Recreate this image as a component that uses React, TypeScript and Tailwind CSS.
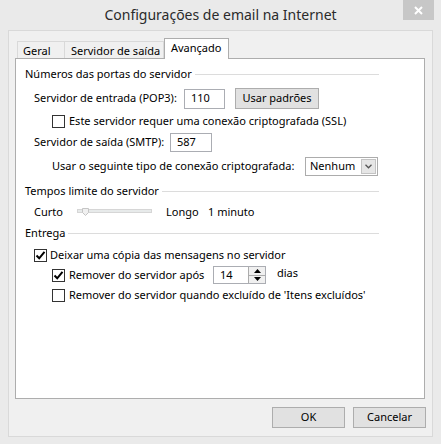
import React from 'react';

function Check({ checked }: { checked?: boolean }) {
  return (
    <span className="w-[13px] h-[13px] border border-[#333333] bg-white flex items-center justify-center shrink-0">
      {checked && (
        <svg width="11" height="11" viewBox="0 0 11 11">
          <path d="M1.5 5.5 L4.2 8.3 L9.5 1.8" stroke="#000" strokeWidth="2" fill="none" />
        </svg>
      )}
    </span>
  );
}

function Section({ title }: { title: string }) {
  return (
    <div className="flex items-center h-[16px] pl-[9px] pr-[45px]">
      <span className="whitespace-nowrap">{title}</span>
      <span className="flex-1 h-px bg-[#dcdcdc] ml-[3px]" />
    </div>
  );
}

function Box({ className, children }: { className: string; children?: React.ReactNode }) {
  return (
    <div className={`border border-[#abadb3] bg-white flex items-center pl-[6px] ${className}`}>{children}</div>
  );
}

export default function App() {
  return (
    <div className="w-[441px] h-[444px] bg-[#eaeaea] flex flex-col text-[11px] text-black font-['Segoe_UI','Noto_Sans',sans-serif] overflow-hidden">
      {/* title bar */}
      <div className="h-[30px] grid grid-cols-[1fr_auto_1fr] shrink-0">
        <div />
        <div className="flex items-center text-[14px] text-[#2b2b2b] pb-[1px]">Configurações de email na Internet</div>
        <div className="flex justify-end items-start pr-[7px]">
          <div className="w-[31px] h-[20px] bg-[#c7c7c7] flex items-center justify-center">
            <svg width="9" height="9" viewBox="0 0 9 9">
              <path d="M1 1 L8 8 M8 1 L1 8" stroke="#fff" strokeWidth="2" />
            </svg>
          </div>
        </div>
      </div>

      {/* client */}
      <div className="mx-[8px] h-[407px] border border-[#d9d9d9] bg-[#f0f0f0] flex flex-col">
        {/* tabs */}
        <div className="ml-[6px] mt-[7px] h-[20px] flex items-end pl-[2px]">
          <div className="w-[48px] h-[17px] border border-b-0 border-[#d9d9d9] bg-[#f0f0f0] pl-[5px] leading-[17px]">Geral</div>
          <div className="w-[99px] h-[17px] border border-l-0 border-b-0 border-[#d9d9d9] bg-[#f0f0f0] pl-[6px] leading-[17px] whitespace-nowrap">Servidor de saída</div>
          <div className="relative z-10 -mb-px w-[65px] h-[21px] border border-b-0 border-[#adadad] bg-white pl-[6px] leading-[18px]">Avançado</div>
        </div>

        {/* panel */}
        <div className="ml-[6px] w-[410px] h-[341px] border border-[#adadad] bg-white flex flex-col pt-[7px]">
          <Section title="Números das portas do servidor" />

          <div className="mt-[6px] h-[21px] flex items-center pl-[18px]">
            <span className="w-[150px] whitespace-nowrap">Servidor de entrada (POP3):</span>
            <Box className="w-[41px] h-[20px]">110</Box>
            <div className="ml-[10px] w-[84px] h-[21px] border border-[#adadad] bg-[#e1e1e1] flex items-center justify-center">Usar padrões</div>
          </div>

          <div className="mt-[6px] h-[13px] flex items-center pl-[36px] gap-[4px]">
            <Check />
            <span className="whitespace-nowrap">Este servidor requer uma conexão criptografada (SSL)</span>
          </div>

          <div className="mt-[5px] h-[19px] flex items-center pl-[18px]">
            <span className="w-[136px] whitespace-nowrap">Servidor de saída (SMTP):</span>
            <Box className="w-[42px] h-[19px]">587</Box>
          </div>

          <div className="mt-[5px] h-[19px] flex items-center pl-[36px]">
            <span className="w-[253px] whitespace-nowrap">Usar o seguinte tipo de conexão criptografada:</span>
            <div className="w-[73px] h-[19px] border border-[#acacac] bg-white flex items-center justify-between pl-[4px] pr-[1px]">
              <span>Nenhum</span>
              <span className="w-[15px] h-[15px] border border-[#c3c3c3] bg-[#e6e6e6] flex items-center justify-center">
                <svg width="7" height="5" viewBox="0 0 7 5">
                  <path d="M0.5 0.8 L3.5 3.8 L6.5 0.8" stroke="#555" strokeWidth="1.3" fill="none" />
                </svg>
              </span>
            </div>
          </div>

          <div className="mt-[7px]">
            <Section title="Tempos limite do servidor" />
          </div>

          <div className="mt-[5px] h-[16px] flex items-center pl-[18px]">
            <span className="w-[43px]">Curto</span>
            <svg width="75" height="8" viewBox="0 0 75 8" className="shrink-0">
              <rect x="0.5" y="1.5" width="74" height="3" fill="#e7eaea" stroke="#d6d6d6" />
              <path d="M5.5 0.5 H11.5 V4.5 L8.5 7.5 L5.5 4.5 Z" fill="#f0f0f0" stroke="#c5c5c5" />
            </svg>
            <span className="ml-[14px] w-[42px]">Longo</span>
            <span className="whitespace-nowrap">1 minuto</span>
          </div>

          <div className="mt-[5px]">
            <Section title="Entrega" />
          </div>

          <div className="mt-[8px] h-[13px] flex items-center pl-[18px] gap-[3px]">
            <Check checked />
            <span className="whitespace-nowrap">Deixar uma cópia das mensagens no servidor</span>
          </div>

          <div className="mt-[4px] h-[18px] flex items-center pl-[36px]">
            <Check checked />
            <span className="ml-[4px] w-[144px] whitespace-nowrap">Remover do servidor após</span>
            <div className="w-[53px] h-[18px] border border-[#abadb3] bg-white flex">
              <span className="flex-1 pl-[6px] flex items-center">14</span>
              <div className="w-[17px] flex flex-col border-l border-[#acacac]">
                <span className="flex-1 bg-[#f0f0f0] border-b border-[#acacac] flex items-center justify-center">
                  <svg width="7" height="4" viewBox="0 0 7 4"><path d="M0 4 L3.5 0 L7 4 Z" fill="#000" /></svg>
                </span>
                <span className="flex-1 bg-[#f0f0f0] flex items-center justify-center">
                  <svg width="7" height="4" viewBox="0 0 7 4"><path d="M0 0 L3.5 4 L7 0 Z" fill="#000" /></svg>
                </span>
              </div>
            </div>
            <span className="ml-[11px] -mt-[3px]">dias</span>
          </div>

          <div className="mt-[5px] h-[13px] flex items-center pl-[36px] gap-[4px]">
            <Check />
            <span className="whitespace-nowrap">Remover do servidor quando excluído de 'Itens excluídos'</span>
          </div>
        </div>

        {/* buttons */}
        <div className="mt-[8px] flex justify-end gap-[8px] pr-[6px]">
          <div className="w-[73px] h-[21px] border border-[#adadad] bg-[#e1e1e1] flex items-center justify-center">OK</div>
          <div className="w-[73px] h-[21px] border border-[#adadad] bg-[#e1e1e1] flex items-center justify-center">Cancelar</div>
        </div>
      </div>
    </div>
  );
}
